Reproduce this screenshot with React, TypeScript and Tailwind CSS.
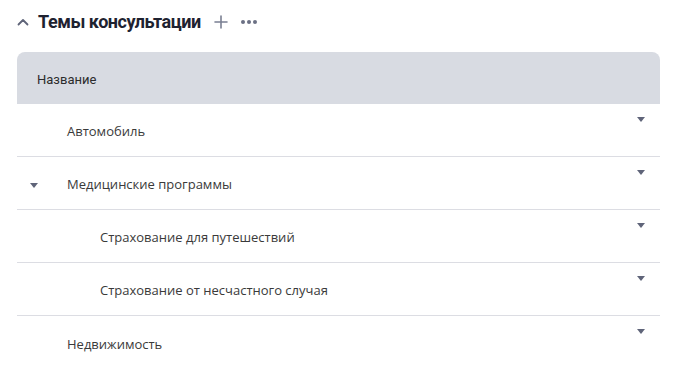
import React from "react";

const Caret = () => (
  <svg width="8" height="5" viewBox="0 0 8 5" className="block">
    <path d="M0 0 L8 0 L4 5 Z" fill="#5f6479" />
  </svg>
);

const rows = [
  { label: "Автомобиль", level: 1, expand: false },
  { label: "Медицинские программы", level: 1, expand: true },
  { label: "Страхование для путешествий", level: 2, expand: false },
  { label: "Страхование от несчастного случая", level: 2, expand: false },
  { label: "Недвижимость", level: 1, expand: false },
];

export default function App() {
  return (
    <div className="w-[677px] h-[372px] bg-white overflow-hidden" style={{ fontFamily: "'Open Sans', 'Noto Sans', sans-serif" }}>
      <div className="flex items-center h-[42px] pl-[17px] pt-[1px]">
        <svg width="12" height="8" viewBox="0 0 12 8" className="mr-[9px]">
          <path d="M1.5 6.5 L6 2 L10.5 6.5" fill="none" stroke="#5f6479" strokeWidth="1.8" strokeLinecap="round" strokeLinejoin="round" />
        </svg>
        <span className="text-[18px] font-bold text-[#1e2230] tracking-[-0.45px]" style={{ fontFamily: "Roboto, sans-serif" }}>
          Темы консультации
        </span>
        <svg width="14" height="14" viewBox="0 0 14 14" className="ml-[13px]">
          <path d="M7 1 V13 M1 7 H13" stroke="#7a7f92" strokeWidth="1.6" strokeLinecap="round" />
        </svg>
        <svg width="18" height="6" viewBox="0 0 18 6" className="ml-[12px]">
          <circle cx="3" cy="3" r="2" fill="#6b7084" />
          <circle cx="9" cy="3" r="2" fill="#6b7084" />
          <circle cx="15" cy="3" r="2" fill="#6b7084" />
        </svg>
      </div>
      <div className="ml-[17px] w-[643px] mt-[10px]">
        <div className="h-[52px] bg-[#d8dbe2] rounded-t-[8px] flex items-center pl-[20px] pt-[4px] text-[13px] text-[#2c2c2c]" style={{ fontFamily: "Roboto, sans-serif" }}>
          Название
        </div>
        {rows.map((r, i) => (
          <div key={i} className={`relative h-[53px] flex items-center pt-[4px] text-[13px] text-[#3a3a3a] ${i < rows.length - 1 ? "border-b border-[#dcdde3]" : ""}`}>
            <div className="w-[34px] flex justify-center">{r.expand ? <Caret /> : null}</div>
            <span className={r.level === 2 ? "ml-[49px]" : "ml-[16px]"}>{r.label}</span>
            <div className="absolute right-[15px] top-[13px]">
              <Caret />
            </div>
          </div>
        ))}
      </div>
    </div>
  );
}
